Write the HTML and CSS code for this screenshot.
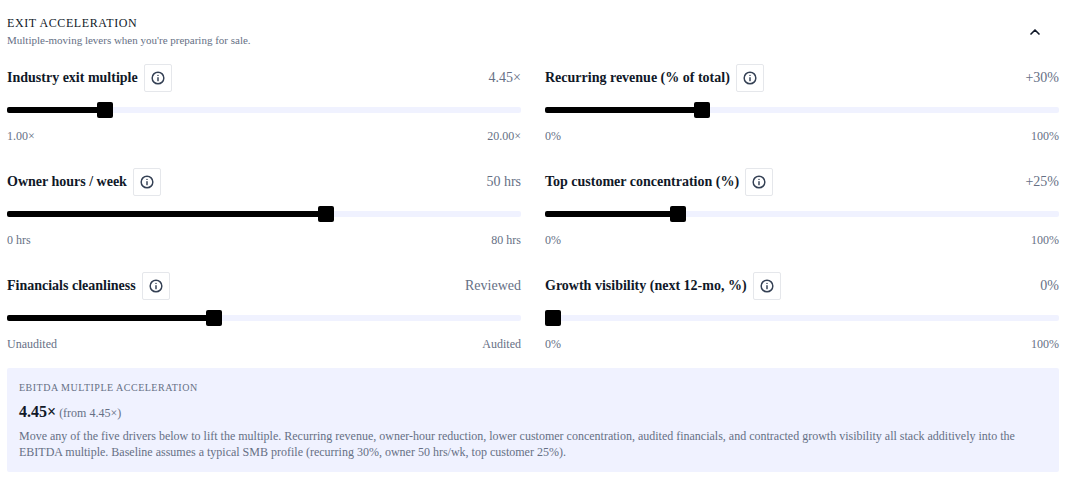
FILE: index.html
```html
<!DOCTYPE html>
<html lang="en">
<head>
<meta charset="utf-8">
<title>Exit acceleration</title>
<link rel="stylesheet" href="styles.css">
</head>
<body>
<svg class="sprite" aria-hidden="true">
  <symbol id="info" viewBox="0 0 24 24">
    <circle cx="12" cy="12" r="10"/><path d="M12 16.500v-5M12 7.500h.01"/>
  </symbol>
</svg>
<main class="panel">
  <header class="panel-header">
    <div>
      <h2 class="panel-title">Exit acceleration</h2>
      <p class="panel-subtitle">Multiple-moving levers when you're preparing for sale.</p>
    </div>
    <button class="toggle" type="button" aria-label="Collapse" aria-expanded="true">
      <svg class="icon" viewBox="0 0 24 24"><path d="m18 15-6-6-6 6"/></svg>
    </button>
  </header>

  <div class="levers">
    <section class="lever">
      <div class="lever-head">
        <label class="lever-label" for="multiple">Industry exit multiple</label>
        <button class="info" type="button" aria-label="About industry exit multiple"><svg class="icon"><use href="#info"/></svg></button>
        <output class="lever-value" for="multiple">4.45×</output>
      </div>
      <input class="slider" id="multiple" type="range" min="1" max="20" step="0.05" value="4.45" style="--fill: 18.16%">
      <div class="bounds"><span>1.00×</span><span>20.00×</span></div>
    </section>

    <section class="lever">
      <div class="lever-head">
        <label class="lever-label" for="recurring">Recurring revenue (% of total)</label>
        <button class="info" type="button" aria-label="About recurring revenue"><svg class="icon"><use href="#info"/></svg></button>
        <output class="lever-value" for="recurring">+30%</output>
      </div>
      <input class="slider" id="recurring" type="range" min="0" max="100" value="30" style="--fill: 30%">
      <div class="bounds"><span>0%</span><span>100%</span></div>
    </section>

    <section class="lever">
      <div class="lever-head">
        <label class="lever-label" for="hours">Owner hours / week</label>
        <button class="info" type="button" aria-label="About owner hours"><svg class="icon"><use href="#info"/></svg></button>
        <output class="lever-value" for="hours">50 hrs</output>
      </div>
      <input class="slider" id="hours" type="range" min="0" max="80" value="50" style="--fill: 62.5%">
      <div class="bounds"><span>0 hrs</span><span>80 hrs</span></div>
    </section>

    <section class="lever">
      <div class="lever-head">
        <label class="lever-label" for="concentration">Top customer concentration (%)</label>
        <button class="info" type="button" aria-label="About customer concentration"><svg class="icon"><use href="#info"/></svg></button>
        <output class="lever-value" for="concentration">+25%</output>
      </div>
      <input class="slider" id="concentration" type="range" min="0" max="100" value="25" style="--fill: 25%">
      <div class="bounds"><span>0%</span><span>100%</span></div>
    </section>

    <section class="lever">
      <div class="lever-head">
        <label class="lever-label" for="financials">Financials cleanliness</label>
        <button class="info" type="button" aria-label="About financials cleanliness"><svg class="icon"><use href="#info"/></svg></button>
        <output class="lever-value" for="financials">Reviewed</output>
      </div>
      <input class="slider" id="financials" type="range" min="0" max="100" value="40" style="--fill: 40%">
      <div class="bounds"><span>Unaudited</span><span>Audited</span></div>
    </section>

    <section class="lever">
      <div class="lever-head">
        <label class="lever-label" for="growth">Growth visibility (next 12-mo, %)</label>
        <button class="info" type="button" aria-label="About growth visibility"><svg class="icon"><use href="#info"/></svg></button>
        <output class="lever-value" for="growth">0%</output>
      </div>
      <input class="slider" id="growth" type="range" min="0" max="100" value="0" style="--fill: 0%">
      <div class="bounds"><span>0%</span><span>100%</span></div>
    </section>
  </div>

  <section class="summary">
    <h3 class="summary-title">EBITDA multiple acceleration</h3>
    <p class="summary-figure">4.45×<span class="summary-base"> (from 4.45×)</span></p>
    <p class="summary-text">Move any of the five drivers below to lift the multiple. Recurring revenue, owner-hour reduction, lower customer concentration, audited financials, and contracted growth visibility all stack additively into the EBITDA multiple. Baseline assumes a typical SMB profile (recurring 30%, owner 50 hrs/wk, top customer 25%).</p>
  </section>
</main>
</body>
</html>
```
FILE: styles.css
```css
* {
  box-sizing: border-box;
}

body {
  margin: 0;
  background: #fff;
  color: #101828;
  font: 14px/20px "Liberation Serif", "Times New Roman", serif;
}

h2, h3, p {
  margin: 0;
  font-weight: 400;
}

.sprite {
  display: none;
}

.icon {
  display: block;
  width: 14px;
  height: 14px;
  fill: none;
  stroke: currentColor;
  stroke-width: 2.5;
  stroke-linecap: round;
  stroke-linejoin: round;
}

.panel {
  padding: 8px 11px 12px 7px;
}

.panel-header {
  display: flex;
  align-items: center;
  justify-content: space-between;
}

.panel-title {
  font-size: 12px;
  line-height: 16px;
  letter-spacing: 0.05em;
  text-transform: uppercase;
}

.panel-subtitle {
  color: #667085;
  font-size: 11px;
  line-height: 18px;
}

.toggle {
  display: grid;
  place-items: center;
  width: 48px;
  height: 48px;
  padding: 0;
  border: 0;
  background: none;
  color: #101828;
}

.toggle .icon {
  width: 16px;
  height: 16px;
}

.levers {
  display: grid;
  grid-template-columns: 1fr 1fr;
  gap: 24px;
  margin-top: 8px;
}

.lever {
  display: flex;
  flex-direction: column;
  gap: 10px;
}

.lever-head {
  display: flex;
  align-items: center;
  gap: 6px;
}

.lever-label {
  font-weight: 700;
}

.lever-value {
  margin-left: auto;
  color: #667085;
}

.info {
  display: grid;
  place-items: center;
  width: 28px;
  height: 28px;
  padding: 0;
  border: 1px solid #e5e7eb;
  border-radius: 2px;
  background: #fff;
  color: #344054;
}

.slider {
  appearance: none;
  width: 100%;
  height: 16px;
  margin: 0;
  background: none;
}

.slider::-webkit-slider-runnable-track {
  height: 6px;
  border-radius: 2px;
  background: linear-gradient(to right, #000 var(--fill), #f0f2ff var(--fill));
}

.slider::-webkit-slider-thumb {
  appearance: none;
  width: 16px;
  height: 16px;
  margin-top: -5px;
  border-radius: 2px;
  background: #000;
  box-shadow: 0 28px 28px rgb(15 23 42 / 2%);
}

.bounds {
  display: flex;
  justify-content: space-between;
  color: #667085;
  font-size: 12px;
  line-height: 16px;
}

.summary {
  margin-top: 16px;
  padding: 12px;
  border-radius: 2px;
  background: #f0f2ff;
  color: #667085;
  font-size: 12px;
  line-height: 16px;
}

.summary-title {
  font-size: 10px;
  line-height: 16px;
  letter-spacing: 0.05em;
  text-transform: uppercase;
}

.summary-figure {
  margin-top: 4px;
  color: #101828;
  font-size: 16px;
  font-weight: 700;
  line-height: 24px;
}

.summary-base {
  color: #667085;
  font-size: 12px;
  font-weight: 400;
  line-height: 16px;
}

.summary-text {
  margin-top: 4px;
}
```
